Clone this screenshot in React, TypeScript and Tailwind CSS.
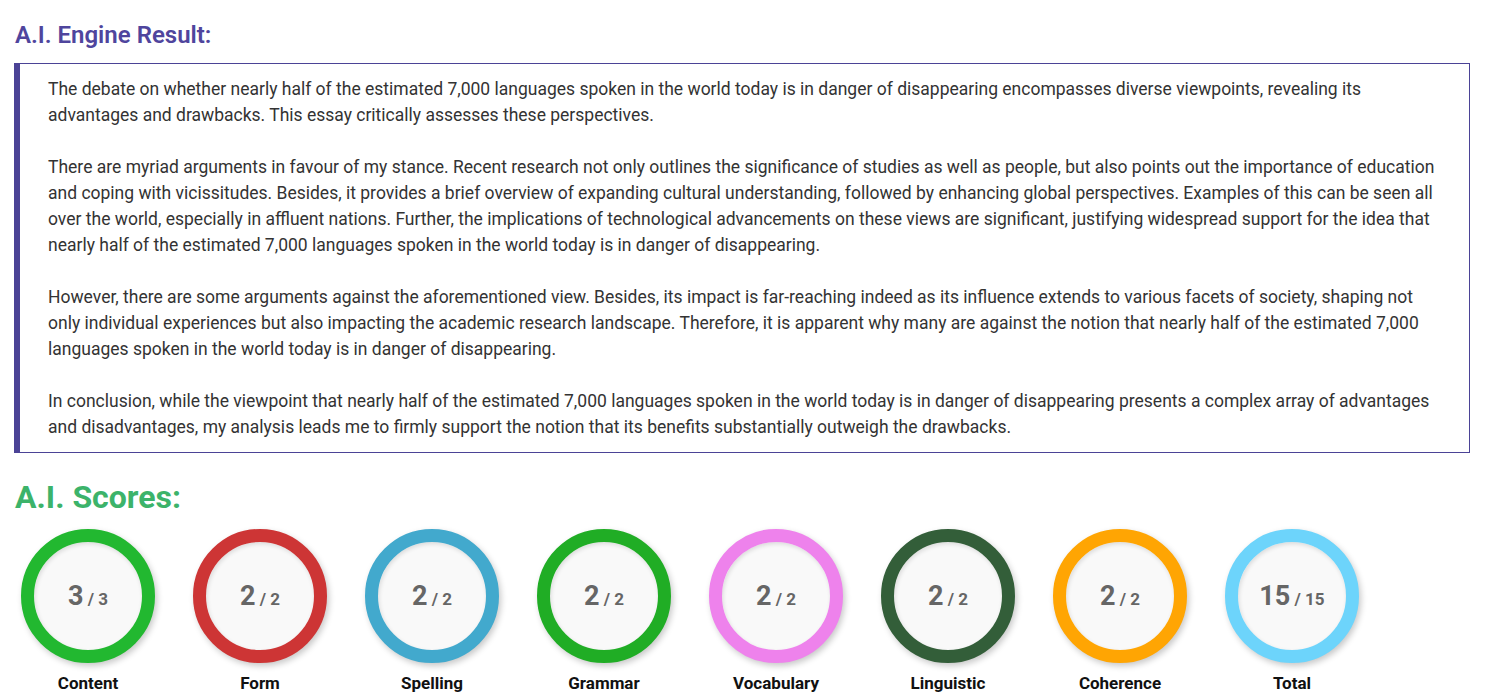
import React from "react";

const scores = [
  { label: "Content", score: 3, max: 3, ring: "border-[#22b830]" },
  { label: "Form", score: 2, max: 2, ring: "border-[#cd3535]" },
  { label: "Spelling", score: 2, max: 2, ring: "border-[#42a9cd]" },
  { label: "Grammar", score: 2, max: 2, ring: "border-[#20ad25]" },
  { label: "Vocabulary", score: 2, max: 2, ring: "border-[#ee82ec]" },
  { label: "Linguistic", score: 2, max: 2, ring: "border-[#335e39]" },
  { label: "Coherence", score: 2, max: 2, ring: "border-[#ffa503]" },
  { label: "Total", score: 15, max: 15, ring: "border-[#6dd4fb]" },
];

const paragraphs = [
  "The debate on whether nearly half of the estimated 7,000 languages spoken in the world today is in danger of disappearing encompasses diverse viewpoints, revealing its advantages and drawbacks. This essay critically assesses these perspectives.",
  "There are myriad arguments in favour of my stance. Recent research not only outlines the significance of studies as well as people, but also points out the importance of education and coping with vicissitudes. Besides, it provides a brief overview of expanding cultural understanding, followed by enhancing global perspectives. Examples of this can be seen all over the world, especially in affluent nations. Further, the implications of technological advancements on these views are significant, justifying widespread support for the idea that nearly half of the estimated 7,000 languages spoken in the world today is in danger of disappearing.",
  "However, there are some arguments against the aforementioned view. Besides, its impact is far-reaching indeed as its influence extends to various facets of society, shaping not only individual experiences but also impacting the academic research landscape. Therefore, it is apparent why many are against the notion that nearly half of the estimated 7,000 languages spoken in the world today is in danger of disappearing.",
  "In conclusion, while the viewpoint that nearly half of the estimated 7,000 languages spoken in the world today is in danger of disappearing presents a complex array of advantages and disadvantages, my analysis leads me to firmly support the notion that its benefits substantially outweigh the drawbacks.",
];

export default function App() {
  return (
    <div className="min-h-[700px] bg-white pl-[14px] pr-[16px] pt-[21px] font-['Roboto',sans-serif]">
      <h2 className="ml-[1px] text-[24px] font-semibold leading-[28px] text-[#4f459d]">
        A.I. Engine Result:
      </h2>
      <div className="mt-[14px] border border-l-[6px] border-[#4b4396] pb-[12px] pl-[28px] pr-[26px] pt-[12px] text-[17.5px] leading-[26px] text-[#333333]">
        {paragraphs.map((p, i) => (
          <p key={i} className={i > 0 ? "mt-[26px]" : ""}>
            {p}
          </p>
        ))}
      </div>
      <h2 className="ml-[1px] mt-[25px] text-[32px] font-bold leading-[38px] text-[#3cb36a]">
        A.I. Scores:
      </h2>
      <div className="ml-[7px] mt-[13px] flex gap-[38px]">
        {scores.map((s) => (
          <div key={s.label} className="flex w-[134px] flex-col items-center">
            <div
              className={`flex h-[134px] w-[134px] items-center justify-center rounded-full border-[13px] bg-[#f9f9f9] shadow-[2px_3px_6px_rgba(0,0,0,0.22),inset_1px_2px_4px_rgba(0,0,0,0.12)] ${s.ring}`}
            >
              <span className="font-bold text-[#666666]">
                <span className="text-[27px]">{s.score}</span>
                <span className="text-[17px]"> / {s.max}</span>
              </span>
            </div>
            <div className="mt-[10px] text-[17px] font-bold leading-[20px] text-[#111111]">
              {s.label}
            </div>
          </div>
        ))}
      </div>
    </div>
  );
}
